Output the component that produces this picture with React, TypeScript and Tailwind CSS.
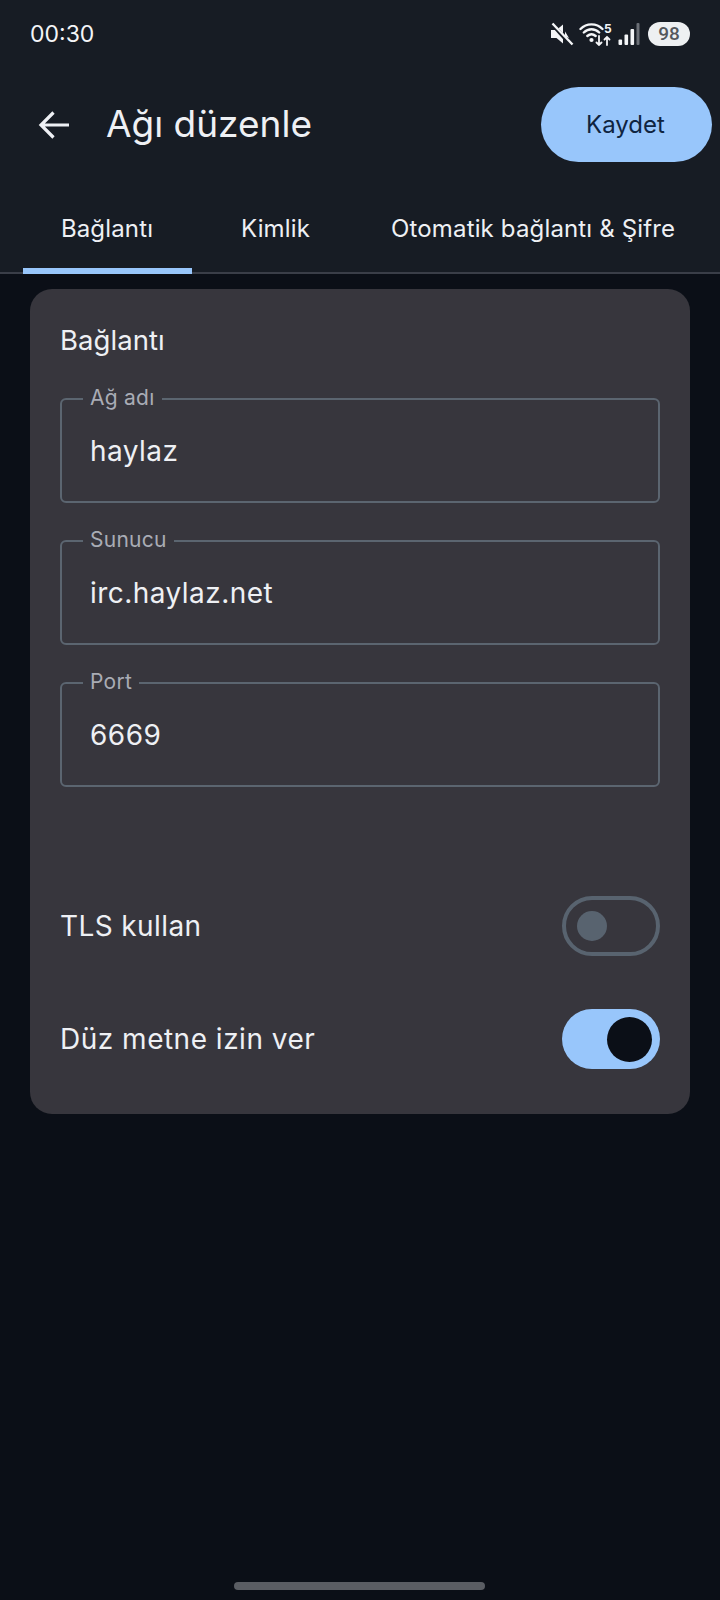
import React from "react";

function Field({ label, value, className }: { label: string; value: string; className?: string }) {
  return (
    <div className={`relative h-[105px] rounded-[6px] border-2 border-[#5b6570] flex items-center pl-[28px] ${className ?? ""}`}>
      <span className="absolute left-[21px] top-[-14px] bg-[#37363d] px-[7px] text-[21px] leading-[24px] tracking-[0.25px] text-[#a9acb5]">{label}</span>
      <span className="text-[28px] leading-[36px] tracking-[0.45px] text-[#eef0f4]">{value}</span>
    </div>
  );
}

function StatusIcons() {
  return (
    <div className="flex items-center">
      <svg width="24" height="24" viewBox="0 0 24 24" className="mr-[5px]">
        <path d="M1 8h5.500L13 2.500v19L6.500 16H1z" fill="#f4f5f7" />
        <path d="M15 9.500v5l4 1.500z" fill="#f4f5f7" />
        <path d="M2 2l19 21" stroke="#171c24" strokeWidth="4" />
        <path d="M2.500 1.500l20 21" stroke="#f4f5f7" strokeWidth="2.400" />
      </svg>
      <svg width="34" height="24" viewBox="0 0 34 24" fill="none" stroke="#f4f5f7" strokeLinecap="round">
        <path d="M1.500 7C7.500 .8 17.500 .8 23.500 7" strokeWidth="2.400" />
        <path d="M4.800 10.500c4.500-4.300 10.900-4.300 15.400 0" strokeWidth="2.400" />
        <path d="M8.300 14c2.500-2.200 5.900-2.200 8.400 0" strokeWidth="2.400" />
        <circle cx="12.500" cy="18" r="2.100" fill="#f4f5f7" stroke="none" />
        <path d="M20 14v9M17.500 20.500l2.500 2.500 2.500-2.500" strokeWidth="1.800" />
        <path d="M28 23v-8M25.500 17.500l2.500-2.500 2.500 2.500" strokeWidth="1.800" />
        <text x="25" y="10.500" fontSize="12" fontWeight="700" fill="#f4f5f7" stroke="none" fontFamily="Inter, sans-serif">5</text>
      </svg>
      <svg width="22" height="24" viewBox="0 0 22 24" className="ml-[5px]">
        <rect x="0.500" y="17.500" width="3.600" height="5.500" rx="1" fill="#f4f5f7" />
        <rect x="6.500" y="12.500" width="3.600" height="10.500" rx="1" fill="#f4f5f7" />
        <rect x="12.500" y="7" width="3.600" height="16" rx="1" fill="#f4f5f7" />
        <rect x="18.500" y="1" width="3" height="22" rx="1" fill="#6b6f76" />
      </svg>
      <div className="ml-[8px] w-[42px] h-[24px] rounded-full bg-[#eef0f2] flex items-center justify-center text-[#55585d] text-[19px] font-medium leading-none [font-family:'Roboto',sans-serif]">98</div>
    </div>
  );
}

export default function App() {
  return (
    <div className="w-[720px] h-[1600px] bg-[#0b0f17] flex flex-col relative overflow-hidden [font-family:Inter,'Liberation_Sans',sans-serif]">
      <div className="bg-[#171c24] h-[274px] flex flex-col shrink-0">
        <div className="h-[66px] pl-[30px] pr-[30px] flex items-center justify-between pt-[1px]">
          <span className="text-[23px] leading-[30px] text-[#f4f5f7]">00:30</span>
          <StatusIcons />
        </div>
        <div className="h-[75px] mt-[21px] flex items-center pl-[36px] pr-[8px]">
          <svg width="36" height="36" viewBox="0 0 36 36" fill="none" stroke="#eef0f4" strokeWidth="3.200" className="shrink-0">
            <path d="M33 18H5M17.500 5.500L5 18 17.500 30.500" />
          </svg>
          <span className="ml-[34px] mb-[2px] text-[37px] leading-[44px] text-[#eef0f4]">Ağı düzenle</span>
          <button className="ml-auto w-[171px] h-[75px] rounded-full bg-[#98c6fb] text-[24px] text-[#0f2440] pr-[2px]">Kaydet</button>
        </div>
        <div className="flex-1 flex relative border-b-2 border-[#3a3e48]">
          <div className="ml-[23px] w-[169px] relative flex items-center justify-center pt-[24px]">
            <span className="text-[24px] tracking-[0.15px] text-[#eef0f4] pr-[1px]">Bağlantı</span>
            <div className="absolute left-0 right-0 bottom-[-2px] h-[6px] bg-[#98c6fb]" />
          </div>
          <div className="ml-[49px] flex items-center pt-[24px]"><span className="text-[24px] tracking-[0.15px] text-[#eef0f4]">Kimlik</span></div>
          <div className="ml-[81px] flex items-center pt-[24px]"><span className="text-[24px] tracking-[0.15px] text-[#eef0f4]">Otomatik bağlantı &amp; Şifre</span></div>
        </div>
      </div>

      <div className="mt-[15px] mx-[30px] h-[825px] bg-[#37363d] rounded-[22px] px-[30px] flex flex-col">
        <div className="mt-[35px] text-[27.500px] tracking-[0.05px] leading-[32px] text-[#eef0f4]">Bağlantı</div>
        <Field className="mt-[42px]" label="Ağ adı" value="haylaz" />
        <Field className="mt-[37px]" label="Sunucu" value="irc.haylaz.net" />
        <Field className="mt-[37px]" label="Port" value="6669" />
        <div className="mt-[109px] h-[60px] flex items-center justify-between">
          <span className="text-[28px] tracking-[0.4px] text-[#eef0f4]">TLS kullan</span>
          <div className="w-[98px] h-[60px] rounded-full border-[4px] border-[#58636f] flex items-center pl-[11px]">
            <div className="w-[30px] h-[30px] rounded-full bg-[#58636f]" />
          </div>
        </div>
        <div className="mt-[53px] h-[60px] flex items-center justify-between">
          <span className="text-[28px] tracking-[0.5px] text-[#eef0f4]">Düz metne izin ver</span>
          <div className="w-[98px] h-[60px] rounded-full bg-[#98c6fb] flex items-center justify-end pr-[8px]">
            <div className="w-[45px] h-[45px] rounded-full bg-[#0b0f17]" />
          </div>
        </div>
      </div>

      <div className="mt-auto mb-[10px] ml-[234px] w-[251px] h-[8px] rounded-full bg-[#5a5d63]" />
    </div>
  );
}
